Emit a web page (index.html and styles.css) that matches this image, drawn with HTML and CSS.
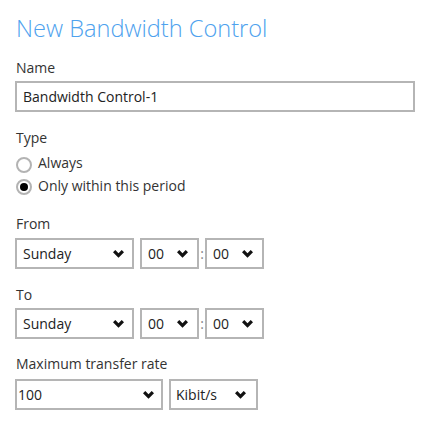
FILE: index.html
```html
<!DOCTYPE html>
<html>
<head>
<meta charset="utf-8">
<link rel="stylesheet" href="styles.css">
</head>
<body>
<div class="page">
  <h1 class="title">New Bandwidth Control</h1>

  <div class="label label-name">Name</div>
  <div class="input">Bandwidth Control-1</div>

  <div class="label label-type">Type</div>
  <div class="radio-row row-always"><span class="radio"></span><span>Always</span></div>
  <div class="radio-row row-period"><span class="radio checked"></span><span>Only within this period</span></div>

  <div class="label label-from">From</div>
  <div class="sel-row row-from">
    <div class="sel sel-day"><span>Sunday</span><svg class="chev" viewBox="0 0 11 8"><polygon points="0,2.3 2.3,0 5.5,3.2 8.7,0 11,2.3 5.5,7.8"/></svg></div>
    <div class="sel sel-time"><span>00</span><svg class="chev" viewBox="0 0 11 8"><polygon points="0,2.3 2.3,0 5.5,3.2 8.7,0 11,2.3 5.5,7.8"/></svg></div>
    <span class="colon">:</span>
    <div class="sel sel-time"><span>00</span><svg class="chev" viewBox="0 0 11 8"><polygon points="0,2.3 2.3,0 5.5,3.2 8.7,0 11,2.3 5.5,7.8"/></svg></div>
  </div>

  <div class="label label-to">To</div>
  <div class="sel-row row-to">
    <div class="sel sel-day"><span>Sunday</span><svg class="chev" viewBox="0 0 11 8"><polygon points="0,2.3 2.3,0 5.5,3.2 8.7,0 11,2.3 5.5,7.8"/></svg></div>
    <div class="sel sel-time"><span>00</span><svg class="chev" viewBox="0 0 11 8"><polygon points="0,2.3 2.3,0 5.5,3.2 8.7,0 11,2.3 5.5,7.8"/></svg></div>
    <span class="colon">:</span>
    <div class="sel sel-time"><span>00</span><svg class="chev" viewBox="0 0 11 8"><polygon points="0,2.3 2.3,0 5.5,3.2 8.7,0 11,2.3 5.5,7.8"/></svg></div>
  </div>

  <div class="label label-max">Maximum transfer rate</div>
  <div class="sel-row row-max">
    <div class="sel sel-rate"><span>100</span><svg class="chev" viewBox="0 0 11 8"><polygon points="0,2.3 2.3,0 5.5,3.2 8.7,0 11,2.3 5.5,7.8"/></svg></div>
    <div class="sel sel-unit"><span>Kibit/s</span><svg class="chev" viewBox="0 0 11 8"><polygon points="0,2.3 2.3,0 5.5,3.2 8.7,0 11,2.3 5.5,7.8"/></svg></div>
  </div>
</div>
</body>
</html>
```

FILE: styles.css
```css
html, body {
  margin: 0;
  padding: 0;
  background: #ffffff;
}
body {
  font-family: "Open Sans", "Noto Sans", sans-serif;
  font-size: 14px;
  color: #333333;
}
.page {
  padding: 12px 15px 0 15px;
}
.title {
  margin: 0;
  font-size: 23.6px;
  font-weight: 300;
  line-height: 32px;
  color: #4ea2ee;
  padding-left: 1px;
}
.label {
  line-height: 20px;
  padding-left: 1px;
}
.label-name { margin-top: 14px; }
.label-type { margin-top: 16px; }
.label-from { margin-top: 18px; }
.label-to { margin-top: 16px; }
.label-max { margin-top: 15px; }

.input {
  margin-top: 3px;
  height: 27px;
  line-height: 27px;
  border: 2px solid #b5b5b5;
  padding: 0 0 0 6px;
  box-sizing: content-box;
  width: 390px;
  color: #222222;
}

.radio-row {
  display: flex;
  align-items: flex-end;
  gap: 6px;
  height: 20px;
  line-height: 20px;
  padding-left: 1px;
}
.row-always { margin-top: 5px; }
.row-period { margin-top: 3px; }
.radio {
  flex: none;
  width: 16px;
  height: 16px;
  box-sizing: border-box;
  border: 2px solid #b3b3b3;
  border-radius: 50%;
  position: relative;
}
.row-period .radio { margin-bottom: 1px; }
.radio.checked::after {
  content: "";
  position: absolute;
  left: 2px;
  top: 2px;
  width: 8px;
  height: 8px;
  border-radius: 50%;
  background: #000000;
}

.sel-row {
  display: flex;
  align-items: center;
  gap: 6px;
}
.row-from { margin-top: 4px; }
.row-to { margin-top: 3px; }
.row-max { margin-top: 5px; }

.sel {
  display: flex;
  align-items: center;
  justify-content: space-between;
  height: 31px;
  box-sizing: border-box;
  border: 2px solid #b5b5b5;
  line-height: 27px;
  color: #222222;
}
.sel-day { width: 119px; padding: 0 8px 0 6px; }
.sel-time { width: 59px; padding: 0 9px 0 6px; }
.sel-rate { width: 148px; padding: 0 7px 0 1px; }
.sel-unit { width: 89px; padding: 0 10px 0 5px; }
.chev {
  width: 11px;
  height: 8px;
  fill: #111111;
  flex: none;
}
.colon {
  width: 0;
  display: flex;
  justify-content: center;
  color: #888888;
  line-height: 20px;
  margin: 0 -3px;
}
```
